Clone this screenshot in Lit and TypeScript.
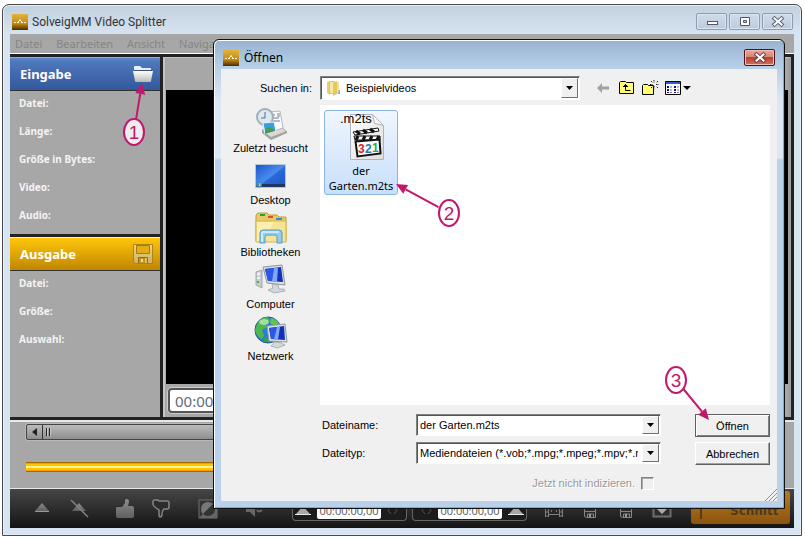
import { LitElement, html, css, svg } from "lit";
import { customElement } from "lit/decorators.js";

const appLogo = html`<svg class="logo" width="16" height="16" viewBox="0 0 16 16" aria-hidden="true">
  <defs><linearGradient id="gold" x1="0" y1="0" x2="0" y2="1">
    <stop offset="0" stop-color="#e3b33c" /><stop offset=".6" stop-color="#c48a16" /><stop offset="1" stop-color="#4a2c00" />
  </linearGradient></defs>
  <rect width="16" height="16" fill="url(#gold)" />
  <path d="M2 8.500h2M5 8.500h2M9 8.500h2M12 8.500h2M7 6.500h2M6 7.500h1M9 7.500h1M7.500 5.500h1" fill="none" stroke="#fff6d8" />
</svg>`;

const folderIcon = html`<svg width="20" height="16" viewBox="0 0 20 16" aria-hidden="true">
  <defs><linearGradient id="fold" x1="0" y1="0" x2="0" y2="1">
    <stop offset="0" stop-color="#fff" /><stop offset="1" stop-color="#b9b9b9" />
  </linearGradient></defs>
  <path d="M1 4V1q0-1 1-1h5l2 2h8q1 0 1 1v1z" fill="#e9edf4" />
  <path d="M0 5h20l-2 10q0 1-1 1H3q-1 0-1-1z" fill="url(#fold)" />
  <path d="M1 4.500h18" stroke="#35507f" />
</svg>`;

const diskIcon = html`<svg width="20" height="20" viewBox="0 0 20 20" aria-hidden="true">
  <defs><linearGradient id="disk" x1="0" y1="0" x2="0" y2="1">
    <stop offset="0" stop-color="#f2d877" /><stop offset="1" stop-color="#ccb163" />
  </linearGradient></defs>
  <path d="M.5.500h19v19H2.500l-2-2z" fill="url(#disk)" stroke="#a88426" />
  <path d="M3.500 1.500h13v8h-13z" fill="#e3ad10" stroke="#a17a1c" />
  <path d="M5.500 19v-5.500h9V19" fill="#c29420" stroke="#8f6c14" />
  <path d="M8 15h2v3H8z" fill="#f0dc98" /><path d="M12 14h2v5h-2z" fill="#d8bd70" />
</svg>`;

const recentIcon = svg`
  <path d="M7 22l9 9 16-7-7-6z" fill="#d8d8d8" stroke="#888" stroke-width=".7" />
  <path d="M7 22v3l9 7v-3zM16 29v3l16-7v-2z" fill="#a2a2a2" />
  <path d="M14 4l11-1 3 17-12 4z" fill="#fbfbfb" stroke="#b8b8b8" />
  <path d="M17 7h3M17 10h7M17 13h8M22 6l3 0M22 8h3" stroke="#6c7f95" />
  <circle cx="10" cy="9" r="8" fill="#dde8f0" stroke="#9eb0bc" stroke-width="2" />
  <path d="M10 4v6h-4" fill="none" stroke="#4e6f8a" />
  <path d="M8 15l11-1 2 9-11 3z" fill="#36a0dc" stroke="#eef" />
  <path d="M10 22l4-3 6 3v1l-10 3z" fill="#4b9a4e" />`;

const desktopIcon = svg`
  <defs><linearGradient id="desk" x1="0" y1="0" x2="1" y2="1">
    <stop offset="0" stop-color="#1c53c8" /><stop offset=".5" stop-color="#4a8cf2" /><stop offset=".55" stop-color="#2a68d8" /><stop offset="1" stop-color="#1d56c4" />
  </linearGradient></defs>
  <path d="M.5 4.500h30v23H.5z" fill="url(#desk)" stroke="#b0c8d8" />
  <path d="M1 24h29v3H1z" fill="#1e3860" />
  <circle cx="4" cy="24.500" r="3" fill="#2f8cc8" />
  <path d="M2.500 23H4v1.500H2.500z" fill="#f05a28" /><path d="M4 23h1.500v1.500H4z" fill="#8ed14a" /><path d="M4 24.500h1.500V26H4z" fill="#ffd43a" />`;

const libraryIcon = svg`
  <path d="M1 5V3l2-2h9l2 2h8l2 2h7v24H1z" fill="#e8c965" stroke="#c29c3a" />
  <path d="M5 2h5v2H5z" fill="#19a63a" /><path d="M13 4h5v2h-5z" fill="#d2542a" /><path d="M21 6h6v2h-6z" fill="#2b8fe0" />
  <path d="M1 9h30v21H1z" fill="#f7e394" stroke="#d5b552" />
  <path d="M2 10h17L9 29H2z" fill="#fff3be" opacity=".7" />
  <path d="M5 31V21q0-3 3-3h16q3 0 3 3v10h-5v-6q0-2-2-2h-8q-2 0-2 2v6z" fill="#93cdea" stroke="#4f9dc7" />
  <path d="M7 30v-9q0-1 1-1h16" stroke="#dff4fd" fill="none" stroke-width="1.500" />`;

const computerIcon = svg`
  <path d="M1 8l6-2v18l-6-3z" fill="#c9cdd0" stroke="#8c9092" stroke-width=".7" />
  <path d="M2 9l3-1v3l-3 1zM2 13h3v2H2z" fill="#eee" /><path d="M2 17h2v2H2z" fill="#30c030" />
  <path d="M8 3l19-2 3 20-18-2z" fill="#d9dee2" stroke="#8f989e" />
  <path d="M10 5l16-2 2 15-15-1z" fill="#1430b8" />
  <path d="M10 5l9-1-2 13-4 0z" fill="#2c58e8" /><path d="M19 4l4 0-1 14-5-1z" fill="#7da6fa" />
  <path d="M17 20l6 1 1 4h5l1 2-11 2-6-3 5-2z" fill="#d3d8dc" stroke="#969ca0" stroke-width=".7" />`;

const networkIcon = svg`
  <circle cx="13" cy="14" r="13" fill="#2a7fd2" stroke="#195aa0" />
  <path d="M3 6q5-5 10-5l2 4-4 2 1 4-5 3 2 6-3 3q-5-4-6-9z" fill="#4eb848" />
  <path d="M16 2q6 1 8 6l-6 2-3-3z" fill="#5cc452" /><path d="M7 24l5-3 3 5q-5 1-8-2z" fill="#37a044" />
  <ellipse cx="9" cy="6" rx="5" ry="3" fill="#c9f0c6" opacity=".7" />
  <path d="M12 10l18-2 2 18-18-1z" fill="#dde2e5" stroke="#8f989e" />
  <path d="M14 12l15-2 1 14-14-1z" fill="#1430b8" /><path d="M14 12l8-1-3 12h-3z" fill="#2c58e8" /><path d="M22 11h3l-2 13-4-1z" fill="#7da6fa" />
  <path d="M20 26l6 1 4 2-8 3-6-2z" fill="#d3d8dc" stroke="#969ca0" stroke-width=".7" />`;

const places = [
  { name: "Zuletzt besucht", icon: recentIcon },
  { name: "Desktop", icon: desktopIcon },
  { name: "Bibliotheken", icon: libraryIcon },
  { name: "Computer", icon: computerIcon },
  { name: "Netzwerk", icon: networkIcon },
];

const clipIcon = html`<svg width="34" height="46" viewBox="0 0 34 46" aria-hidden="true">
  <defs><linearGradient id="pg" x1="0" y1="0" x2="1" y2="1"><stop offset="0" stop-color="#fff" /><stop offset="1" stop-color="#dedede" /></linearGradient></defs>
  <path d="M.5.500h22l11 11v34H.5z" fill="url(#pg)" stroke="#a9b4c0" />
  <path d="M22.500.500l2 9 9 2z" fill="#f7f7f7" stroke="#b4b4b4" />
  <path d="M3 18l25-4 1 3-24 4z" fill="#fff" stroke="#111" />
  <path d="M6 17l4 3M13 16l4 3M20 15l4 3" stroke="#111" stroke-width="3" />
  <path d="M4 22h26v4H5z" fill="#fff" stroke="#111" />
  <path d="M8 22l-2 4M15 22l-2 4M22 22l-2 4M29 22l-2 4" stroke="#111" stroke-width="3" />
  <path d="M5.500 27.500l24-2 1 14-23 3z" fill="#fff" stroke="#111" stroke-width="2" />
  <g font-family="Liberation Sans, sans-serif" font-weight="bold" font-size="12">
    <text x="8" y="39" fill="#d8202c">3</text><text x="15" y="39" fill="#2878b8">2</text><text x="22" y="38" fill="#28b038">1</text>
  </g>
</svg>`;

const smallFolder = html`<svg width="14" height="16" viewBox="0 0 14 16" aria-hidden="true">
  <path d="M0 2l3-1v14l-3-2z" fill="#e9cf72" /><path d="M2.500 1.500h5v12h-5z" fill="#f7e8a6" stroke="#e0c468" />
  <path d="M6 3l4-2v13l-4 2z" fill="#e6c862" /><path d="M10 2h2v12h-2z" fill="#f3df94" /><path d="M12 10h1v4h-2z" fill="#6cb0f0" />
</svg>`;

const dropArrow = html`<svg width="7" height="4" viewBox="0 0 7 4" aria-hidden="true"><path d="M0 0h7L3.500 4z" /></svg>`;

const glyphs = {
  mark: svg`<path d="M10 4l7 8H3z" fill="url(#gl)" /><path d="M3 12.500h14" stroke="#999" />`,
  unmark: svg`<path d="M11 4l7 8H4z" fill="url(#gl)" /><path d="M3 1l17 17" stroke="#808080" stroke-width="1.500" />`,
  up: svg`<path d="M1 9q0-1 2-1h4l3-4V1q0-1 2-1 2 0 2 3l-1 4h4q2 0 2 2v8q0 2-2 2H3q-2 0-2-2z" fill="url(#gl)" />`,
  down: svg`<path d="M2 2q0-1 2-1h3l1 1h8q2 0 2 1v5q0 2-2 2h-3q-2 2-2 5 0 3-2 3-1 0-1-3v-4l-3-2q-3-2-3-4z" fill="#2c2c2c" stroke="#858585" stroke-width="1.500" />`,
  contrast: svg`<rect x="1" y="1" width="18" height="18" fill="#333" stroke="#707070" /><path d="M19 1v18H1z" fill="#666" /><path d="M5 15A7 7 0 0 1 15 5z" fill="#777" /><path d="M5 15A7 7 0 0 0 15 5z" fill="#333" />`,
  sound: svg`<path d="M1 7h4l5-5v16l-5-5H1z" fill="#666" /><path d="M12 11q2 3 5 0" stroke="#666" stroke-width="2" fill="none" />`,
  film: svg`<path d="M1.500 4v14M4.500 4v14M15.500 4v14M18.500 4v14" stroke="#808080" /><path d="M1 5h4M1 9h4M1 13h4M1 17h4M15 5h4M15 9h4M15 13h4M15 17h4M5 15.500h10M5 5.500h10" stroke="#808080" /><path d="M7 9h1M12 9h1M7 12h1M12 12h1" stroke="#777" stroke-width="2" />`,
  save: svg`<path d="M4.500 5.500h11v13h-9l-2-1z" fill="#2a2a2a" stroke="#858585" /><path d="M5 12.500h10" stroke="#858585" /><path d="M7.500 18v-3h6v3" fill="none" stroke="#858585" /><path d="M9 15h2v3h-2z" fill="#999" />`,
  tray: svg`<path d="M1.500 3.500h17v14h-17z" fill="#2c2c2c" stroke="#6e6e6e" stroke-width="2" /><path d="M10 15l-5-5h3V6h4v4h3z" fill="#aaa" />`,
};
type Glyph = keyof typeof glyphs;

const tool = (name: Glyph, label: string) => html`<button class="tool" aria-label=${label}>
  <svg width="20" height="20" viewBox="0 0 20 20" aria-hidden="true">
    <defs><linearGradient id="gl" x1="0" y1="0" x2="0" y2="1"><stop offset="0" stop-color="#8c8c8c" /><stop offset="1" stop-color="#606060" /></linearGradient></defs>
    ${glyphs[name]}
  </svg></button>`;

const peak = html`<svg width="16" height="9" viewBox="0 0 16 9" aria-hidden="true"><path d="M8 0l7 8H1z" fill="#a8a8a8" /><path d="M0 8.500h16" stroke="#e8e8e8" /></svg>`;
const arrows = html`<svg width="11" height="7" viewBox="0 0 11 7" aria-hidden="true"><path d="M4 0L1 3.500 4 7M7 0l3 3.500L7 7" stroke="#555" fill="none" /></svg>`;

@customElement("app-root")
export class AppRoot extends LitElement {
  static styles = css`
    :host { display: block; position: relative; box-sizing: border-box; min-height: 100vh; padding: 4px 3px 3px 2px; background: #fff; font: 12px/16px "Noto Sans", sans-serif; color: #000; }
    * { box-sizing: border-box; }
    button, input, select { font: inherit; color: inherit; margin: 0; padding: 0; border: 0; border-radius: 0; background: none; appearance: none; outline: 0; }
    svg { display: block; flex: none; overflow: visible; }
    .window { display: flex; flex-direction: column; min-height: calc(100vh - 7px); border: 1px solid #4a4a4a; border-radius: 7px 7px 0 0; padding: 0 7px 7px; background: linear-gradient(#c2d0de, #d7e4f2 30px); box-shadow: inset 0 0 0 1px #e6eef6; }
    .titlebar { display: flex; align-items: center; gap: 4px; height: 29px; padding: 4px 1px 0 2px; color: #333; }
    .titlebar h1, .dlg-title h2 { flex: 1; margin: 0; font-size: 12px; line-height: 16px; font-weight: normal; }
    .titlebar h1 { font-family: Roboto, sans-serif; }
    .captions { display: flex; gap: 2px; }
    .caption { display: grid; place-items: center; width: 31px; height: 17px; border: 1px solid #8a9cb2; border-radius: 2px; background: linear-gradient(#cfdbe9, #bccbdd); box-shadow: inset 0 0 0 1px #dde6f0; }
    .menubar { display: flex; gap: 14px; height: 20px; padding: 2px 5px; background: #a7a7a7; color: #858585; border-bottom: 1px solid #fff; font-size: 11px; line-height: 16px; }
    .main { flex: 1; display: flex; gap: 3px; padding: 3px 3px 3px 0; background: #222; }
    .side { display: flex; flex-direction: column; gap: 3px; width: 150px; }
    .panel { background: #a7a7a7; }
    .panel.in { height: 177px; }
    .panel.out { flex: 1; }
    .head { display: flex; align-items: center; justify-content: space-between; height: 34px; padding: 0 7px 0 10px; color: #fff; border-bottom: 1px solid #333; }
    .head h2 { margin: 0; font-size: 13px; line-height: 18px; font-weight: bold; }
    .in .head { background: linear-gradient(#6187cf, #5078bd 3px, #33589c); border-top: 1px solid #90abdd; }
    .out .head { background: linear-gradient(#ffc60a, #c08600); border-top: 1px solid #fff0b8; }
    .facts { display: grid; gap: 12px; margin: 0; padding: 4px 9px; color: #f4f4f4; font-size: 10px; font-weight: bold; line-height: 16px; }
    .view { flex: 1; display: flex; flex-direction: column; border-left: 2px solid #c4c4c4; border-top: 1px solid #c4c4c4; border-right: 3px solid #a0a0a0; background: #a7a7a7; }
    .view-bar { height: 32px; }
    .screen { flex: 1; margin-left: 1px; background: #000; }
    .view-foot { height: 33px; padding: 4px 3px; }
    .clock { width: 120px; height: 25px; padding: 0 5px; border: 2px solid #555; border-radius: 4px; background: #fff; color: #626b78; font-size: 15px; box-shadow: 0 0 0 1px #ccc; }
    .timeline { height: 69px; padding: 2px 15px 0 16px; background: #a7a7a7; border-top: 2px solid #e8e8e8; border-bottom: 1px solid #e8e8e8; }
    .scroll { display: flex; height: 16px; margin-bottom: 22px; border: 1px solid #444; border-radius: 2px; background: linear-gradient(#bbb, #8f8f8f); box-shadow: 0 0 0 1px #b8b8b8; }
    .scroll button { display: grid; place-items: center; width: 16px; border-right: 1px solid #333; }
    .grip { margin: 3px; }
    .track { height: 10px; border-top: 1px solid #a06a00; border-bottom: 1px solid #a06a00; background: linear-gradient(#ff9c00 0 1px, #ffc600 1px 3px, #fff09a 3px 5px, #ffc600 5px 7px, #ff9c00 7px); }
    .tools { display: flex; height: 39px; padding-left: 14px; background: linear-gradient(#464646, #141414); }
    .tool { display: grid; place-items: center; width: 36px; height: 39px; }
    .pair { display: flex; margin-right: 11px; }
    .pair.last { margin-right: 19px; }
    .range { display: flex; align-items: center; gap: 6px; width: 115px; height: 30px; margin: 2px 5px 0 0; padding: 10px 2px 2px; border: 1px solid #666; border-top-color: #222; border-radius: 4px; background: #1c1c1c; }
    .range.end { flex-direction: row-reverse; }
    .range input { width: 64px; height: 17px; text-align: center; background: #fff; color: #555; font: 11px/16px "Open Sans", sans-serif; border-radius: 2px; }
    .outputs { display: flex; padding-left: 4px; }
    .cut { display: flex; align-items: center; gap: 28px; flex: 1; height: 33px; margin: 2px 4px 0 11px; padding: 6px 9px 0; border-radius: 3px; background: linear-gradient(#b67c1e, #8c5310); color: #4f3a20; font: bold 12px/16px "DejaVu Sans", sans-serif; }

    .dialog { position: absolute; left: 213px; right: 20px; top: 39px; border: 1px solid #111; border-radius: 6px 6px 0 0; padding: 0 7px 7px; background: linear-gradient(#99b4d1, #b9d1ea 30px, #dce8f5 60px, #dce8f5 118px, #b9d1ea 120px); box-shadow: inset 1px 1px 0 #fff, inset -1px -1px 0 #3ccbe0; }
    .dlg-title { display: flex; align-items: center; gap: 5px; height: 29px; margin: 0 -6px; padding: 6px 8px 0; border-radius: 6px 6px 0 0; background: linear-gradient(#fff 0 1px, #99b4d1 1px, #b9d1ea); }
    .close { display: grid; place-items: center; width: 31px; height: 17px; border: 1px solid #4c1418; border-radius: 2px; background: linear-gradient(#e8a89c, #d98475 48%, #b8402c 50%, #cc7460); box-shadow: inset 0 0 0 1px #f0c0b8; }
    .body { display: grid; grid-template-columns: 99px minmax(0, 1fr); background: #f0f0f0; font: 11px/14px "Liberation Sans", sans-serif; }
    .lookin { grid-column: 1 / -1; display: flex; align-items: center; padding: 7px 0 0; height: 31px; }
    .lookin > label { width: 91px; margin-right: 8px; text-align: right; }
    .combo { display: flex; align-items: center; border: 1px solid #fff; border-top-color: #808080; border-left-color: #808080; background: #fff; box-shadow: inset 1px 1px 0 #555; }
    .combo input, .combo select { flex: 1; min-width: 0; height: 100%; padding: 0 3px; text-overflow: clip; }
    .combo .drop { display: grid; place-items: center; align-self: stretch; width: 17px; margin: 1px; border: 1px solid #fff; border-right-color: #707070; border-bottom-color: #707070; background: #f0f0f0; pointer-events: none; }
    .lookin .combo { width: 260px; height: 24px; padding-left: 6px; }
    .lookin .combo select { padding-left: 5px; }
    .nav { display: flex; align-items: center; gap: 7px; margin-left: 14px; }
    .places { display: flex; flex-direction: column; gap: 4px; padding-top: 8px; }
    .place { display: grid; justify-items: center; height: 48px; }
    .place span { white-space: nowrap; line-height: 16px; }
    .files { margin: 5px 7px 0 0; height: 300px; padding: 5px 4px; background: #fff; }
    .file { display: grid; justify-items: center; align-content: start; position: relative; width: 74px; height: 85px; border: 1px solid #8ab4e4; border-radius: 3px; background: linear-gradient(#f0f6fe, #c8dffb); font: 11px/15px "Noto Sans", sans-serif; }
    .file svg { margin: 3px 0 3px 12px; }
    .ext { position: absolute; left: 15px; top: 0; font: 13px/15px "Liberation Sans", sans-serif; }
    .form { grid-column: 1 / -1; display: grid; grid-template-columns: 94px minmax(0, 245px) 1fr; row-gap: 5px; padding: 9px 7px 0 101px; }
    .form label { line-height: 22px; }
    .form .combo { height: 22px; }
    .push { justify-self: end; width: 75px; height: 23px; border: 1px solid #fff; border-right-color: #606060; border-bottom-color: #606060; box-shadow: inset -1px -1px 0 #a0a0a0; background: #f0f0f0; }
    .push.default { border-color: #606060; box-shadow: inset 1px 1px 0 #fff, inset -1px -1px 0 #808080; }
    .noindex { grid-column: 1 / -1; display: flex; align-items: center; justify-content: flex-end; gap: 6px; height: 36px; padding: 0 123px 0 0; color: #9a9a9a; text-shadow: 1px 1px 0 #fff; }
    .noindex input { width: 13px; height: 13px; border: 1px solid #fff; border-top-color: #808080; border-left-color: #808080; box-shadow: inset 1px 1px 0 #aaa; order: 2; }
    .grip-corner { position: absolute; right: 7px; bottom: 7px; }
    .notes { position: absolute; inset: 0; width: 100%; height: 100%; pointer-events: none; font-family: "Liberation Sans", sans-serif; }
  `;

  private note(n: number, x: number, y: number, tx: number, ty: number) {
    const len = Math.hypot(tx - x, ty - y);
    const ux = (tx - x) / len;
    const uy = (ty - y) / len;
    const bx = tx - ux * 11;
    const by = ty - uy * 11;
    return svg`
      <path d="M${x + ux * 12} ${y + uy * 12}L${bx} ${by}" stroke="#c2186b" stroke-width="2" />
      <path d="M${tx} ${ty}L${bx - uy * 5} ${by + ux * 5}L${bx + uy * 5} ${by - ux * 5}z" fill="#c2186b" />
      <ellipse cx=${x} cy=${y} rx="10" ry="13" fill=${n === 1 ? "#eee" : "#fff"} stroke="#c2186b" stroke-width="2" />
      <text x=${x} y=${y + 7} text-anchor="middle" font-size="19" fill="#c2186b">${n}</text>`;
  }

  private cross(stroke: string) {
    return html`<svg width="12" height="9" viewBox="0 0 12 9" aria-hidden="true">
      <path d="M2.500 1.500l7 6M9.500 1.500l-7 6" stroke=${stroke} stroke-width="4" stroke-linecap="square" />
      <path d="M2.500 1.500l7 6M9.500 1.500l-7 6" stroke="#fff" stroke-width="2" stroke-linecap="square" /></svg>`;
  }

  private facts(names: string[]) {
    return html`<div class="facts">${names.map((n) => html`<div>${n}:</div>`)}</div>`;
  }

  private dialog() {
    return html`<section class="dialog" role="dialog" aria-label="Öffnen">
      <header class="dlg-title">${appLogo}<h2>Öffnen</h2>
        <button class="close" aria-label="Schließen">${this.cross("#6b4048")}</button></header>
      <div class="body">
        <div class="lookin">
          <label for="folder">Suchen in:</label>
          <div class="combo">${smallFolder}<select id="folder"><option>Beispielvideos</option></select><span class="drop">${dropArrow}</span></div>
          <div class="nav">
            <button aria-label="Zurück"><svg width="18" height="16" viewBox="0 0 18 16"><path d="M3 8l5-5v3.500h7v3H8V13z" fill="#a0a0a0" /></svg></button>
            <button aria-label="Nach oben"><svg width="16" height="16" viewBox="0 0 16 16"><path d="M.5 13.500v-11l1-1h5l1 1h7v11z" fill="#ffff70" stroke="#000" /><path d="M4 6.500h5M5 5.500h3M6.500 4v6.500h5" stroke="#000" fill="none" /></svg></button>
            <button aria-label="Neuer Ordner"><svg width="16" height="16" viewBox="0 0 16 16"><path d="M.5 14.500v-9l1-1h4l1 1h5v9z" fill="#ffff70" stroke="#000" /><path d="M12 0v3M12 6v3M8 4.500h3M14 4.500h3M9 1l2 2M16 1l-2 2M9 8l2-2M16 8l-2-2" stroke="#222" stroke-dasharray="1.500 1" /></svg></button>
            <button aria-label="Ansicht"><svg width="26" height="16" viewBox="0 0 26 16"><path d="M.5 1.500h15v13H.5z" fill="#fff" stroke="#000" /><path d="M1 2h14v2H1z" fill="#2a62c8" /><path d="M2 6h2v2H2zM9 6h2v2H9zM2 9h2v2H2zM9 9h2v2H9zM2 12h2v1H2zM9 12h2v1H9z" fill="#10108c" /><path d="M5 7h2M12 7h2M5 10h2M12 10h2M5 12.500h2M12 12.500h2" stroke="#778" /><path d="M18 6h8l-4 4z" /></svg></button>
          </div>
        </div>
        <nav class="places">${places.map((p) => html`<button class="place"><svg width="32" height="32" viewBox="0 0 32 32" aria-hidden="true">${p.icon}</svg><span>${p.name}</span></button>`)}</nav>
        <div class="files"><button class="file">${clipIcon}<span class="ext">.m2ts</span><span>der<br />Garten.m2ts</span></button></div>
        <form class="form" @submit=${(e: Event) => e.preventDefault()}>
          <label for="name">Dateiname:</label>
          <div class="combo"><input id="name" type="text" value="der Garten.m2ts" /><span class="drop">${dropArrow}</span></div>
          <button class="push default">Öffnen</button>
          <label for="type">Dateityp:</label>
          <div class="combo"><select id="type"><option>Mediendateien (*.vob;*.mpg;*.mpeg;*.mpv;*.m2ts)</option></select><span class="drop">${dropArrow}</span></div>
          <button class="push" type="button">Abbrechen</button>
        </form>
        <label class="noindex"><input type="checkbox" disabled />Jetzt nicht indizieren.</label>
      </div>
      <svg class="grip-corner" width="12" height="12" viewBox="0 0 12 12" aria-hidden="true"><path d="M0 12L12 0M4 12l8-8M8 12l4-4" stroke="#8c8c8c" /><path d="M1 12L12 1M5 12l7-7M9 12l3-3" stroke="#fff" stroke-width=".5" /></svg>
    </section>`;
  }

  render() {
    return html`
      <main class="window">
        <header class="titlebar">${appLogo}<h1>SolveigMM Video Splitter</h1>
          <div class="captions">
            <button class="caption" aria-label="Minimieren"><svg width="12" height="9" viewBox="0 0 12 9"><rect x="1.500" y="4.500" width="10" height="3" fill="#fff" stroke="#556" /></svg></button>
            <button class="caption" aria-label="Maximieren"><svg width="10" height="9" viewBox="0 0 10 9"><path d="M.5.500h9v8h-9z" fill="#fff" stroke="#556" /><path d="M3.500 3.500h3v2h-3z" fill="#c3d0e0" stroke="#556" /></svg></button>
            <button class="caption" aria-label="Schließen">${this.cross("#5c6470")}</button>
          </div>
        </header>
        <nav class="menubar">${["Datei", "Bearbeiten", "Ansicht", "Navigation"].map((m) => html`<button>${m}</button>`)}</nav>
        <div class="main">
          <div class="side">
            <section class="panel in"><div class="head"><h2>Eingabe</h2><button aria-label="Datei öffnen">${folderIcon}</button></div>
              ${this.facts(["Datei", "Länge", "Größe in Bytes", "Video", "Audio"])}</section>
            <section class="panel out"><div class="head"><h2>Ausgabe</h2><button aria-label="Speichern">${diskIcon}</button></div>
              ${this.facts(["Datei", "Größe", "Auswahl"])}</section>
          </div>
          <section class="view"><div class="view-bar"></div><div class="screen"></div>
            <div class="view-foot"><input class="clock" type="text" aria-label="Position" value="00:00:00,00" /></div></section>
        </div>
        <section class="timeline">
          <div class="scroll"><button aria-label="Zurück"><svg width="5" height="8" viewBox="0 0 5 8"><path d="M5 0v8L0 4z" fill="#222" /></svg></button>
            <svg class="grip" width="6" height="8" viewBox="0 0 6 8" aria-hidden="true"><path d="M.5 0v8M3.500 0v8" stroke="#222" /><path d="M1.500 0v8M4.500 0v8" stroke="#ccc" /></svg></div>
          <div class="track"></div>
        </section>
        <footer class="tools">
          <div class="pair">${tool("mark", "Marke setzen")}${tool("unmark", "Marke entfernen")}</div>
          <div class="pair">${tool("up", "Behalten")}${tool("down", "Verwerfen")}</div>
          <div class="pair">${tool("contrast", "Invertieren")}</div>
          <div class="pair last">${tool("sound", "Ton")}</div>
          <div class="range">${peak}<input type="text" aria-label="Anfang" value="00:00:00,00" />${arrows}</div>
          <div class="range end">${peak}<input type="text" aria-label="Ende" value="00:00:00,00" />${arrows}</div>
          <div class="outputs">${tool("film", "Film")}${tool("save", "Speichern")}${tool("save", "Speichern unter")}${tool("tray", "Ablage")}</div>
          <button class="cut"><svg width="2" height="16" viewBox="0 0 2 16"><path d="M1 0v16" stroke="#5a3a10" stroke-width="2" /></svg>Schnitt</button>
        </footer>
      </main>
      ${this.dialog()}
      <svg class="notes" aria-hidden="true">
        ${this.note(1, 134, 132, 142, 83)}${this.note(2, 449, 213, 396, 184)}${this.note(3, 676, 380, 709, 420)}
      </svg>`;
  }
}
